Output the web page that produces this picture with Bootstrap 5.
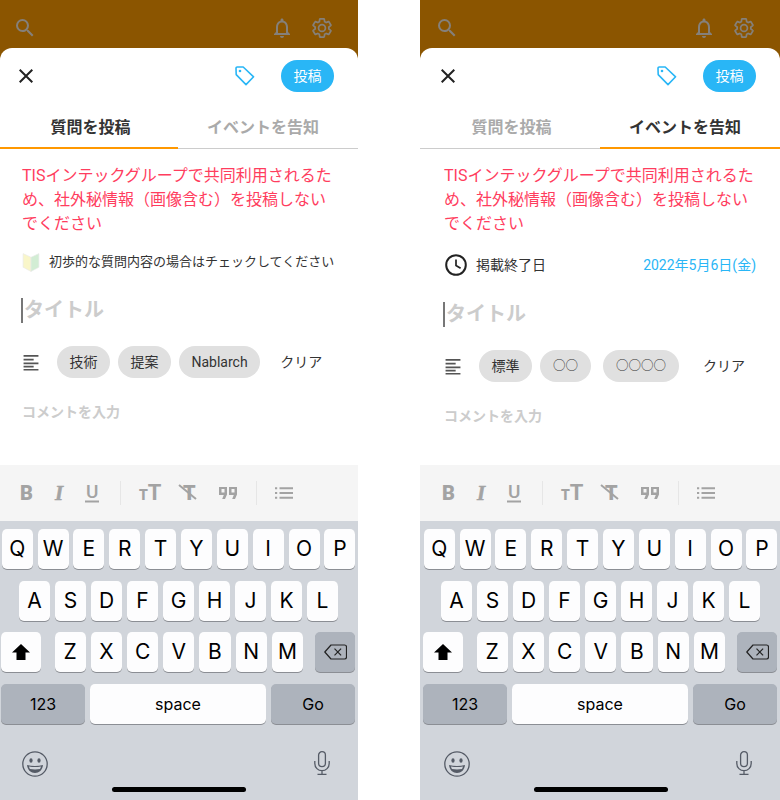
<!DOCTYPE html>
<html lang="ja">
<head>
  <meta charset="UTF-8" />
  <meta name="viewport" content="width=device-width, initial-scale=1" />
  <title>投稿画面</title>
  <link href="https://cdn.jsdelivr.net/npm/bootstrap@5.3.0/dist/css/bootstrap.min.css" rel="stylesheet" />
  <style>
    body {
      font-family: Roboto, "Noto Sans CJK JP", sans-serif;
      background: #fff;
      color: #333;
      width: 780px;
      height: 800px;
      overflow: hidden;
    }
    .phone { height: 800px; }
    .phone-l { width: 358px; }
    .phone-r { width: 360px; }
    .app-bar { height: 60px; margin-bottom: -12px; background: #8b5500; color: #85807a; flex-shrink: 0; padding: 8px 26px 12px 16px; }
    .gear-ico { margin-left: 18px; }
    .sheet { background: #fff; border-radius: 12px 12px 0 0; min-height: 0; }
    .sheet-top { height: 56px; padding: 12px 24px 0 19px; }
    .close-ico { margin-top: 9px; }
    .post-btn { width: 53px; height: 32px; padding: 0; font-size: 14px; line-height: 32px; border: 0; border-radius: 16px; background: #29b6f6; color: #fff; }
    .tag-ico { margin: 6px 26px 0 0; color: #29b6f6; }
    .tabs-row { height: 45px; }
    .tab-item { border-bottom: 1px solid #ccc; font-size: 16px; font-weight: 700; color: #aaa; line-height: 47px; text-align: center; height: 45px; }
    .tab-a { padding-left: 3px; }
    .tab-b { padding-right: 10px; }
    .phone-l .tab-a { flex: 0 0 178px; }
    .phone-l .tab-b { flex: 0 0 180px; }
    .phone-r .tab-a, .phone-r .tab-b { flex: 0 0 180px; }
    .tab-item.is-on { color: #333; border-bottom: 2px solid #ff9800; }
    .notice { padding: 15px 0 0 22px; width: 338px; font-size: 16px; line-height: 24px; color: #ff3d5e; }
    .beginner { margin: 16px 0 0 22px; height: 20px; font-size: 13px; gap: 9px; }
    .end-row { margin: 18px 24px 0 25px; height: 22px; font-size: 14px; gap: 9px; }
    .end-date { color: #29b6f6; }
    .title-row { margin: 24px 0 0 21px; height: 28px; font-size: 20px; font-weight: 700; color: #ccc; }
    .caret-bar { width: 2px; height: 25px; background: #777; margin-right: 1px; }
    .chips { margin: 22px 0 0 23px; gap: 8px; height: 32px; }
    .chip-item { height: 32px; line-height: 32px; padding: 0 12.5px; border-radius: 16px; background: #e0e0e0; font-size: 14px; color: #333; }
    .chip-circ { padding: 0 13px; font-size: 12.5px; }
    .chip-clear { font-size: 14px; color: #333; margin-left: 12px; }
    .align-ico { margin-right: 10px; }
    .comment { margin: 24px 0 0 22px; font-size: 14px; font-weight: 700; line-height: 20px; color: #ccc; }
    /* right screen: sheet is 2px wider on the left */
    .phone-r .app-bar { padding-left: 18px; }
    .phone-r .sheet-top { padding-left: 21px; }
    .phone-r .notice { padding-left: 24px; width: 340px; }
    .phone-r .title-row { margin-left: 23px; }
    .phone-r .chips { margin-left: 25px; }
    .phone-r .comment { margin-left: 24px; }
    .phone-r .edit-bar > * { margin-left: 2px; }
    .phone-r .kbd { padding-left: 2px; }
    .edit-bar { height: 56px; background: #f5f5f5; color: #a3a3a3; flex-shrink: 0; position: relative; font-family: Roboto, sans-serif; }
    .edit-bar > * { position: absolute; top: 50%; transform: translateY(-50%); }
    .fmt { font-size: 20px; font-weight: 900; line-height: 1; }
    .fmt-i { font-family: "Liberation Serif", serif; font-style: italic; font-size: 21px; font-weight: 700; -webkit-text-stroke: .5px #a3a3a3; }
    .fmt-u { font-size: 19px; font-weight: 500; line-height: 16px; padding: 0 1px 1px; border-bottom: 2px solid #a3a3a3; }
    .fmt-big { font-size: 22px; font-weight: 700; }
    .fmt-sm { font-size: 14px; font-weight: 900; }
    .fmt-x svg { position: absolute; left: -5px; top: 1px; }
    .bar-sep { width: 1px; height: 24px; background: #e6e6e6; }
    .kbd { height: 279px; background: #d1d5db; flex-shrink: 0; padding-top: 8px; font-family: Inter, sans-serif; color: #000; }
    .kbd-row { gap: 4.9px; height: 40px; margin-bottom: 11.7px; padding: 0 2.6px 0 1.7px; }
    .kbd-row.r2 { padding: 0 20px 0 19px; gap: 5px; }
    .kbd-row.r3 { padding: 0 3px 0 1px; gap: 5px; }
    .kbd-row.r4 { padding: 0 3px 0 1px; gap: 5px; }
    .k { flex: 1 1 0; min-width: 0; background: #fdfdfe; border-radius: 5px; box-shadow: 0 1px 0 #8b8e94; font-size: 21px; line-height: 40px; text-align: center; }
    .k-wide { flex: 0 0 40px; }
    .k-gray { background: #adb3bc; }
    .k-mod { flex: 0 0 84px; font-size: 16px; }
    .k-space { font-size: 16px; }
    .gap-shift { margin-right: 8.5px; }
    .gap-del { margin-left: 7px; }
    .kbd-foot { padding: 15px 28px 0 22px; height: 41px; }
    .home-bar { width: 134px; height: 5px; border-radius: 3px; background: #000; margin: 10px 0 0 112px; }
  </style>
</head>
<body>

<svg width="0" height="0" class="position-absolute">
  <symbol id="i-search" viewBox="3 3 18 18"><path fill="currentColor" d="M15.5 14h-.79l-.28-.27A6.471 6.471 0 0 0 16 9.5 6.5 6.5 0 1 0 9.5 16c1.61 0 3.09-.59 4.23-1.57l.27.28v.79l5 4.99L20.49 19l-4.99-5zm-6 0C7.01 14 5 11.99 5 9.5S7.01 5 9.5 5 14 7.01 14 9.5 11.99 14 9.5 14z"/></symbol>
  <symbol id="i-bell" viewBox="0 0 24 24"><path fill="currentColor" d="M12 22c1.1 0 2-.9 2-2h-4c0 1.1.9 2 2 2zm6-6v-5c0-3.07-1.63-5.64-4.5-6.32V4c0-.83-.67-1.5-1.5-1.5s-1.5.67-1.5 1.5v.68C7.64 5.36 6 7.92 6 11v5l-2 2v1h16v-1l-2-2zm-2 1H8v-6c0-2.48 1.51-4.5 4-4.5s4 2.02 4 4.5v6z"/></symbol>
  <symbol id="i-gear" viewBox="1.5 1.5 21 21"><path fill="none" stroke="currentColor" stroke-width="1.8" d="M19.14 12.94c.04-.3.06-.61.06-.94 0-.32-.02-.64-.07-.94l2.03-1.58a.49.49 0 0 0 .12-.61l-1.92-3.32a.488.488 0 0 0-.59-.22l-2.39.96c-.5-.38-1.03-.7-1.62-.94l-.36-2.54a.484.484 0 0 0-.48-.41h-3.84c-.24 0-.43.17-.47.41l-.36 2.54c-.59.24-1.13.57-1.62.94l-2.39-.96c-.22-.08-.47 0-.59.22L2.74 8.87c-.12.21-.08.47.12.61l2.03 1.58c-.05.3-.09.63-.09.94s.02.64.07.94l-2.03 1.58a.49.49 0 0 0-.12.61l1.92 3.32c.12.22.37.29.59.22l2.39-.96c.5.38 1.03.7 1.62.94l.36 2.54c.05.24.24.41.48.41h3.84c.24 0 .44-.17.47-.41l.36-2.54c.59-.24 1.13-.56 1.62-.94l2.39.96c.22.08.47 0 .59-.22l1.92-3.32c.12-.22.07-.47-.12-.61l-2.01-1.58zM12 15.6c-1.98 0-3.6-1.62-3.6-3.6s1.62-3.6 3.6-3.6 3.6 1.62 3.6 3.6-1.62 3.6-3.6 3.6z"/></symbol>
  <symbol id="i-close" viewBox="0 0 14 14"><path stroke="currentColor" stroke-width="2" d="M.7.7l12.6 12.6M13.3.7L.7 13.3"/></symbol>
  <symbol id="i-tag" viewBox="0 0 20 20"><path fill="none" stroke="currentColor" stroke-width="1.6" stroke-linejoin="round" d="M1 2.200a1.200 1.200 0 0 1 1.200-1.200h6l10.400 9.800-7.600 7.800L1.200 8.600z"/><circle cx="5" cy="5" r="1.300" fill="currentColor"/></symbol>
  <symbol id="i-align" viewBox="0 0 14 16"><path fill="#555" d="M0 1h14v1.600H0zM0 4.500h9.500v1.600H0zM0 8h14v1.600H0zM0 11h9.500v1.600H0zM0 14h14v1.600H0z"/></symbol>
  <symbol id="i-clock" viewBox="0 0 22 22"><circle cx="11" cy="11" r="9.800" fill="none" stroke="#222" stroke-width="2"/><path fill="none" stroke="#222" stroke-width="1.700" d="M11 5.500V11.600l4.600 2.700"/></symbol>
  <symbol id="i-leaf" viewBox="0 0 16 19"><path fill="#f9f6c9" stroke="#eaeaea" stroke-width=".6" d="M.5 1.500 8 5v13.500L.5 14.500z"/><path fill="#d2edd4" stroke="#eaeaea" stroke-width=".6" d="M15.500 1.500 8 5v13.500l7.500-4z"/></symbol>
  <symbol id="i-quote" viewBox="0 0 18 12"><path fill="currentColor" fill-rule="evenodd" d="M0 0h8v7.500L6 12H3.200l1.600-4H0zM2.500 2v3.500h3V2zM10 0h8v7.500L16 12h-2.800l1.600-4H10zM12.500 2v3.500h3V2z"/></symbol>
  <symbol id="i-list" viewBox="0 0 18 12"><path fill="currentColor" d="M0 .2h2.200v2H0zM4.500 .2H18v2H4.500zM0 5h2.200v2H0zM4.500 5H18v2H4.500zM0 9.800h2.200v2H0zM4.500 9.800H18v2H4.500z"/></symbol>
  <symbol id="i-shift" viewBox="0 0 18 16"><path fill="#000" d="M9 0l9 8.500h-4.500V16h-9V8.500H0z"/></symbol>
  <symbol id="i-del" viewBox="0 0 23 16"><path fill="none" stroke="#222" stroke-width="1.200" stroke-linejoin="round" d="M7 1h13.500a2 2 0 0 1 2 2v10a2 2 0 0 1-2 2H7L.8 8z"/><path stroke="#222" stroke-width="1.200" d="M10.500 4.700l6.600 6.600M17.100 4.700l-6.600 6.600"/></symbol>
  <symbol id="i-emoji" viewBox="0 0 26 26"><circle cx="13" cy="13" r="12.200" fill="none" stroke="#555b66" stroke-width="1.300"/><ellipse cx="9" cy="9.500" rx="1.600" ry="2.200" fill="#555b66"/><ellipse cx="17" cy="9.500" rx="1.600" ry="2.200" fill="#555b66"/><path fill="#555b66" d="M5 14c5 1.300 11 1.300 16 0-.5 5-4 8-8 8s-7.500-3-8-8z"/><path fill="#d1d5db" d="M7 15.500c4 .8 8 .8 12 0-.3 1.300-.7 2-1 2.500-3.300.6-6.700.6-10 0-.4-.5-.8-1.200-1-2.500z"/></symbol>
  <symbol id="i-mic" viewBox="0 0 16 24"><rect x="4.600" y=".7" width="6.800" height="15" rx="3.400" fill="none" stroke="#555b66" stroke-width="1.300"/><path fill="none" stroke="#555b66" stroke-width="1.300" d="M.8 10v2.500a7.200 7.200 0 0 0 14.400 0V10M8 19.700v3.600M3.500 23.300h9"/></symbol>
</svg>

<div class="d-flex justify-content-between">

  <!-- question tab -->
  <div class="phone phone-l d-flex flex-column">
    <div class="app-bar d-flex align-items-center">
      <svg width="18" height="18"><use href="#i-search"/></svg>
      <svg class="ms-auto" width="24" height="24"><use href="#i-bell"/></svg>
      <svg class="gear-ico" width="20" height="20"><use href="#i-gear"/></svg>
    </div>
    <div class="sheet flex-grow-1">
      <div class="sheet-top d-flex align-items-start">
        <svg class="close-ico" width="14" height="14" color="#222"><use href="#i-close"/></svg>
        <svg class="tag-ico ms-auto" width="20" height="20"><use href="#i-tag"/></svg>
        <button class="post-btn">投稿</button>
      </div>
      <div class="tabs-row d-flex">
        <div class="tab-item tab-a is-on">質問を投稿</div>
        <div class="tab-item tab-b">イベントを告知</div>
      </div>
      <div class="notice">TISインテックグループで共同利用されるため、社外秘情報（画像含む）を投稿しないでください</div>
      <div class="beginner d-flex align-items-center">
        <svg width="18" height="20"><use href="#i-leaf"/></svg>
        <span>初歩的な質問内容の場合はチェックしてください</span>
      </div>
      <div class="title-row d-flex align-items-center"><span class="caret-bar"></span>タイトル</div>
      <div class="chips d-flex align-items-center">
        <svg class="align-ico" width="16" height="17"><use href="#i-align"/></svg>
        <span class="chip-item">技術</span>
        <span class="chip-item">提案</span>
        <span class="chip-item">Nablarch</span>
        <span class="chip-clear">クリア</span>
      </div>
      <div class="comment">コメントを入力</div>
    </div>
    <div class="js-bottom"></div>
  </div>

  <!-- event tab -->
  <div class="phone phone-r d-flex flex-column">
    <div class="app-bar d-flex align-items-center">
      <svg width="18" height="18"><use href="#i-search"/></svg>
      <svg class="ms-auto" width="24" height="24"><use href="#i-bell"/></svg>
      <svg class="gear-ico" width="20" height="20"><use href="#i-gear"/></svg>
    </div>
    <div class="sheet flex-grow-1">
      <div class="sheet-top d-flex align-items-start">
        <svg class="close-ico" width="14" height="14" color="#222"><use href="#i-close"/></svg>
        <svg class="tag-ico ms-auto" width="20" height="20"><use href="#i-tag"/></svg>
        <button class="post-btn">投稿</button>
      </div>
      <div class="tabs-row d-flex">
        <div class="tab-item tab-a">質問を投稿</div>
        <div class="tab-item tab-b is-on">イベントを告知</div>
      </div>
      <div class="notice">TISインテックグループで共同利用されるため、社外秘情報（画像含む）を投稿しないでください</div>
      <div class="end-row d-flex align-items-center">
        <svg width="22" height="22"><use href="#i-clock"/></svg>
        <span>掲載終了日</span>
        <span class="end-date ms-auto">2022年5月6日(金)</span>
      </div>
      <div class="title-row d-flex align-items-center"><span class="caret-bar"></span>タイトル</div>
      <div class="chips d-flex align-items-center">
        <svg class="align-ico" width="16" height="17"><use href="#i-align"/></svg>
        <span class="chip-item">標準</span>
        <span class="chip-item chip-circ">○○</span>
        <span class="chip-item chip-circ ms-1">○○○○</span>
        <span class="chip-clear ms-3">クリア</span>
      </div>
      <div class="comment">コメントを入力</div>
    </div>
    <div class="js-bottom"></div>
  </div>
</div>

<template id="bottom-tpl">
  <div class="edit-bar">
    <span class="fmt" style="left:20px">B</span>
    <span class="fmt fmt-i" style="left:55px">I</span>
    <span class="fmt fmt-u" style="left:85px">U</span>
    <span class="bar-sep" style="left:120px"></span>
    <span class="fmt" style="left:139px"><span class="fmt-sm">T</span><span class="fmt-big">T</span></span>
    <span class="fmt fmt-x" style="left:183px">T<svg width="20" height="16"><path stroke="currentColor" stroke-width="2" d="M1 1l17 14"/></svg></span>
    <svg style="left:219px" width="18" height="12"><use href="#i-quote"/></svg>
    <span class="bar-sep" style="left:256px"></span>
    <svg style="left:275px" width="18" height="12"><use href="#i-list"/></svg>
  </div>
  <div class="kbd">
    <div class="kbd-row d-flex">
      <div class="k">Q</div><div class="k">W</div><div class="k">E</div><div class="k">R</div><div class="k">T</div><div class="k">Y</div><div class="k">U</div><div class="k">I</div><div class="k">O</div><div class="k">P</div>
    </div>
    <div class="kbd-row r2 d-flex">
      <div class="k">A</div><div class="k">S</div><div class="k">D</div><div class="k">F</div><div class="k">G</div><div class="k">H</div><div class="k">J</div><div class="k">K</div><div class="k">L</div>
    </div>
    <div class="kbd-row r3 d-flex">
      <div class="k k-wide gap-shift d-flex align-items-center justify-content-center"><svg width="18" height="16"><use href="#i-shift"/></svg></div>
      <div class="k">Z</div><div class="k">X</div><div class="k">C</div><div class="k">V</div><div class="k">B</div><div class="k">N</div><div class="k">M</div>
      <div class="k k-wide k-gray gap-del d-flex align-items-center justify-content-center"><svg width="23" height="16"><use href="#i-del"/></svg></div>
    </div>
    <div class="kbd-row r4 d-flex">
      <div class="k k-mod k-gray">123</div>
      <div class="k k-space">space</div>
      <div class="k k-mod k-gray">Go</div>
    </div>
    <div class="kbd-foot d-flex justify-content-between align-items-start">
      <svg width="26" height="26"><use href="#i-emoji"/></svg>
      <svg width="16" height="24"><use href="#i-mic"/></svg>
    </div>
    <div class="home-bar"></div>
  </div>
</template>

<script src="https://cdn.jsdelivr.net/npm/bootstrap@5.3.0/dist/js/bootstrap.bundle.min.js"></script>
<script>
  // toolbar and keyboard are the same on both screens
  document.querySelectorAll(".js-bottom").forEach(el => {
    el.appendChild(document.getElementById("bottom-tpl").content.cloneNode(true));
  });
</script>
</body>
</html>
